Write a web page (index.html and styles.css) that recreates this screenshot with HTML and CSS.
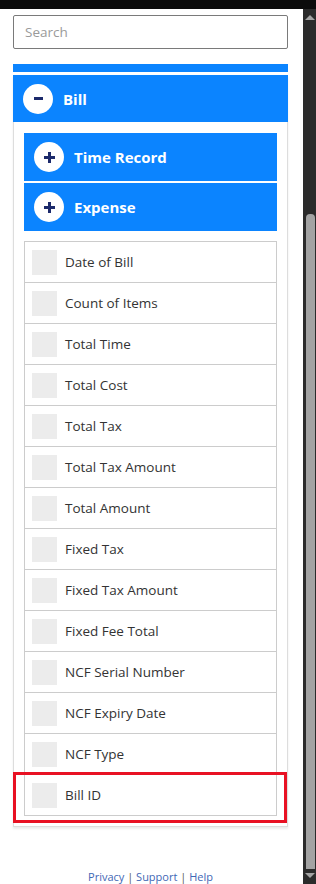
FILE: index.html
```html
<!DOCTYPE html>
<html lang="en">
<head>
  <meta charset="UTF-8" />
  <meta name="viewport" content="width=device-width, initial-scale=1.0"/>
  <title>Field Picker</title>
  <link rel="stylesheet" href="styles.css">
</head>
<body>
  <div class="topbar"></div>

  <div class="window">
    <div class="page">
      <input type="text" class="search" placeholder="Search" />

      <div class="prev-section"></div>

      <!-- Bill section (expanded) -->
      <div class="section">
        <div class="section-head">
          <span class="toggle"><span class="minus"></span></span>
          <span class="section-title">Bill</span>
        </div>
        <div class="section-body">
          <div class="sub-head">
            <span class="toggle"><span class="plus"></span></span>
            <span class="section-title">Time Record</span>
          </div>
          <div class="sub-head">
            <span class="toggle"><span class="plus"></span></span>
            <span class="section-title">Expense</span>
          </div>

          <ul class="field-list">
            <li><span class="check"></span>Date of Bill</li>
            <li><span class="check"></span>Count of Items</li>
            <li><span class="check"></span>Total Time</li>
            <li><span class="check"></span>Total Cost</li>
            <li><span class="check"></span>Total Tax</li>
            <li><span class="check"></span>Total Tax Amount</li>
            <li><span class="check"></span>Total Amount</li>
            <li><span class="check"></span>Fixed Tax</li>
            <li><span class="check"></span>Fixed Tax Amount</li>
            <li><span class="check"></span>Fixed Fee Total</li>
            <li><span class="check"></span>NCF Serial Number</li>
            <li><span class="check"></span>NCF Expiry Date</li>
            <li><span class="check"></span>NCF Type</li>
            <li class="marked"><span class="check"></span>Bill ID<span class="highlight"></span></li>
          </ul>
        </div>
      </div>

      <div class="footer">
        <a href="#">Privacy</a> | <a href="#">Support</a> | <a href="#">Help</a>
      </div>
    </div>

    <!-- fake window scrollbar -->
    <div class="scrollbar">
      <div class="arrow-up"></div>
      <div class="track"><div class="thumb"></div></div>
      <div class="arrow-down"></div>
    </div>
  </div>
</body>
</html>
```

FILE: styles.css
```css
body {
  font-family: "Open Sans", "Noto Sans", sans-serif;
  background: #fff;
  color: #333;
  margin: 0;
  height: 884px;
  overflow: hidden;
}
.topbar {
  height: 9px;
  background: #0b0b0b;
}
.window {
  display: flex;
  height: 875px;
}
.page {
  flex: 1;
  padding: 6px 15px 0 13px;
}
.search {
  display: block;
  box-sizing: border-box;
  width: 100%;
  height: 34px;
  margin: 0;
  padding: 0 11px;
  border: 1px solid #7a7a7a;
  border-radius: 2px;
  font-family: inherit;
  font-size: 13.5px;
  color: #333;
}
.search::placeholder {
  color: #9a9a9a;
}
.prev-section {
  height: 8px;
  margin-top: 15px;
  background: #0b84ff;
}
.section {
  margin-top: 3px;
  box-shadow: 0 2px 2px rgba(0,0,0,0.08);
}
.section-head, .sub-head {
  display: flex;
  align-items: center;
  background: #0b84ff;
  color: #fff;
}
.section-head {
  height: 47px;
  padding-left: 10px;
}
.sub-head {
  height: 48px;
  padding-left: 10px;
  margin-bottom: 2px;
}
.toggle {
  width: 30px;
  height: 30px;
  border-radius: 50%;
  background: #fff;
  display: flex;
  align-items: center;
  justify-content: center;
  margin-right: 10px;
  position: relative;
}
.minus {
  width: 9px;
  height: 3px;
  background: #1c2a6b;
}
.plus {
  width: 11px;
  height: 11px;
  background:
    linear-gradient(#1c2a6b, #1c2a6b) center / 11px 3px no-repeat,
    linear-gradient(#1c2a6b, #1c2a6b) center / 3px 11px no-repeat;
}
.section-title {
  font-size: 15px;
  font-weight: 700;
}
.section-body {
  border: 1px solid #ddd;
  border-top: none;
  padding: 11px 10px 10px;
}
.field-list {
  list-style: none;
  margin: 10px 0 0;
  padding: 0;
  border: 1px solid #ccc;
  border-bottom: none;
}
.field-list li {
  display: flex;
  align-items: center;
  height: 40px;
  border-bottom: 1px solid #ccc;
  padding-left: 7px;
  font-size: 13.5px;
  color: #333;
}
.check {
  width: 25px;
  height: 25px;
  background: #ececec;
  margin-right: 8px;
}
.marked {
  position: relative;
}
/* red annotation frame around the last row */
.highlight {
  position: absolute;
  top: -3px;
  left: -12px;
  right: -11px;
  bottom: -8px;
  border: 3px solid #e81123;
}
.footer {
  margin-top: 42px;
  text-align: center;
  font-size: 11px;
  color: #555;
}
.footer a {
  color: #3f67b5;
  text-decoration: none;
}
.scrollbar {
  width: 13px;
  background: #2b2b2b;
  display: flex;
  flex-direction: column;
  align-items: center;
}
.arrow-up, .arrow-down {
  width: 0;
  height: 0;
  border-left: 5px solid transparent;
  border-right: 5px solid transparent;
}
.arrow-up {
  margin-top: 6px;
  border-bottom: 5px solid #a3a3a3;
}
.arrow-down {
  margin-bottom: 6px;
  border-top: 5px solid #a3a3a3;
}
.track {
  flex: 1;
  width: 9px;
  display: flex;
  flex-direction: column;
  justify-content: flex-end;
  padding: 0 0 4px 2px;
}
.thumb {
  height: 655px;
  background: #a3a3a3;
  border-radius: 4px 4px 0 0;
}
```
